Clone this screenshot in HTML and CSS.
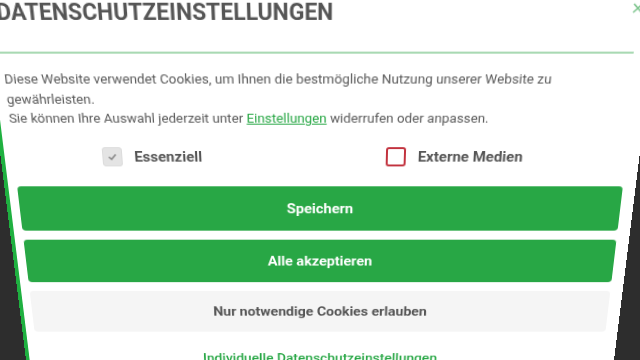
FILE: index.html
```html
<!DOCTYPE html>
<html lang="de">
<head>
<meta charset="utf-8">
<title>Datenschutzeinstellungen</title>
<link rel="stylesheet" href="styles.css">
</head>
<body>
<div class="modal">
  <button class="close" aria-label="Schließen">
    <svg width="10" height="10" viewBox="0 0 10 10"><path d="M1 1L9 9M9 1L1 9" stroke="#7cc48c" stroke-width="1.5" fill="none"/></svg>
  </button>
  <h2 class="title">Datenschutzeinstellungen</h2>
  <hr class="divider">
  <p class="intro">Diese Website verwendet Cookies, um Ihnen die bestmögliche Nutzung unserer Website zu gewährleisten.<br>Sie können Ihre Auswahl jederzeit unter <a href="#">Einstellungen</a> widerrufen oder anpassen.</p>
  <div class="options">
    <label class="option">
      <span class="box box-disabled"><svg width="10" height="10" viewBox="0 0 10 10"><path d="M1.5 5.2L4 7.5L8.5 2.5" stroke="#8a8a8a" stroke-width="1.6" fill="none"/></svg></span>
      <span>Essenziell</span>
    </label>
    <label class="option">
      <span class="box box-red"></span>
      <span>Externe Medien</span>
    </label>
  </div>
  <div class="actions">
    <button class="btn">Speichern</button>
    <button class="btn">Alle akzeptieren</button>
    <button class="btn btn-light">Nur notwendige Cookies erlauben</button>
  </div>
  <a class="more" href="#">Individuelle Datenschutzeinstellungen</a>
</div>
</body>
</html>
```
FILE: styles.css
```css
html, body {
  margin: 0;
  height: 100%;
  overflow: hidden;
  background: #2d2d2d;
}
body {
  font-family: Roboto, "Liberation Sans", sans-serif;
}
.modal {
  position: relative;
  width: 640px;
  height: 430px;
  box-sizing: border-box;
  background: #fff;
  border-left: 4px solid #1fb040;
  padding: 2px 13px 0 9px;
  transform-origin: 320px 152px;
  transform: perspective(686px) rotateX(-15deg);
}
.close {
  position: absolute;
  top: 6px;
  right: 14px;
  padding: 0;
  border: 0;
  background: none;
  line-height: 0;
}
.title {
  margin: 0;
  font-size: 21.7px;
  line-height: 26px;
  font-weight: 700;
  color: #555;
  text-transform: uppercase;
}
.divider {
  border: 0;
  height: 2px;
  background: #a9d9b3;
  margin: 24px 5px 15px -9px;
}
.intro {
  margin: 0;
  font-size: 13.25px;
  line-height: 19.6px;
  color: #5a5a5a;
}
.intro a {
  color: #28a745;
}
.options {
  display: flex;
  justify-content: center;
  align-items: center;
  gap: 184px;
  padding-right: 15px;
  margin-top: 19.5px;
  height: 20px;
}
.option {
  display: flex;
  align-items: center;
  gap: 12px;
  font-size: 15px;
  font-weight: 700;
  color: #555;
}
.box {
  width: 20px;
  height: 20px;
  box-sizing: border-box;
  border-radius: 3px;
}
.box-disabled {
  display: flex;
  align-items: center;
  justify-content: center;
  background: #e4e4e4;
  border: 1px solid #dcdcdc;
}
.box-red {
  background: #fff;
  border: 2px solid #c2323e;
}
.actions {
  display: flex;
  flex-direction: column;
  gap: 10px;
  margin-top: 20.4px;
}
.btn {
  height: 48px;
  border: 0;
  border-radius: 4px;
  background: #28a745;
  color: #fff;
  font-family: Roboto, "Liberation Sans", sans-serif;
  font-size: 15px;
  font-weight: 700;
}
.btn-light {
  background: #f5f5f5;
  color: #555;
}
.more {
  display: block;
  margin-top: 22px;
  text-align: center;
  font-size: 15px;
  line-height: 20px;
  font-weight: 500;
  color: #28a745;
  text-decoration: none;
}
```
